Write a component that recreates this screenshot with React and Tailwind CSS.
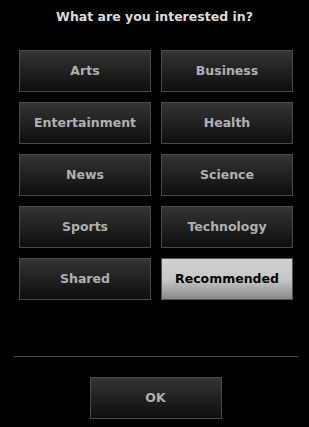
const topics = [
  "Arts",
  "Business",
  "Entertainment",
  "Health",
  "News",
  "Science",
  "Sports",
  "Technology",
  "Shared",
  "Recommended",
];

const selected = "Recommended";

const darkBtn =
  "h-[42px] border border-[#4a4a4a] bg-gradient-to-b from-[#353535] to-[#0e0e0e] text-[#b0b0b0] text-[12.5px] font-bold";
const lightBtn =
  "h-[42px] border border-[#555] bg-gradient-to-b from-[#d0d0d0] via-[#c8c8c8] to-[#8a8a8a] text-black text-[12.5px] font-bold";

export default function App() {
  return (
    <div
      className="w-[309px] h-[427px] bg-black flex flex-col"
      style={{ fontFamily: '"DejaVu Sans", Verdana, sans-serif' }}
    >
      <div className="pt-[8px] h-[50px] text-center text-[12.5px] font-bold text-[#dcdcdc]">
        What are you interested in?
      </div>

      <div className="grid grid-cols-2 gap-x-[10px] gap-y-[10px] px-[19px] pr-[16px]">
        {topics.map((t) => (
          <button key={t} className={t === selected ? lightBtn : darkBtn}>
            {t}
          </button>
        ))}
      </div>

      <div className="mx-[14px] mr-[11px] mt-[56px] border-t border-[#4a4a4a]" />

      <div className="flex justify-center pt-[20px] pl-[2px]">
        <button className={`${darkBtn} w-[132px]`}>OK</button>
      </div>
    </div>
  );
}
